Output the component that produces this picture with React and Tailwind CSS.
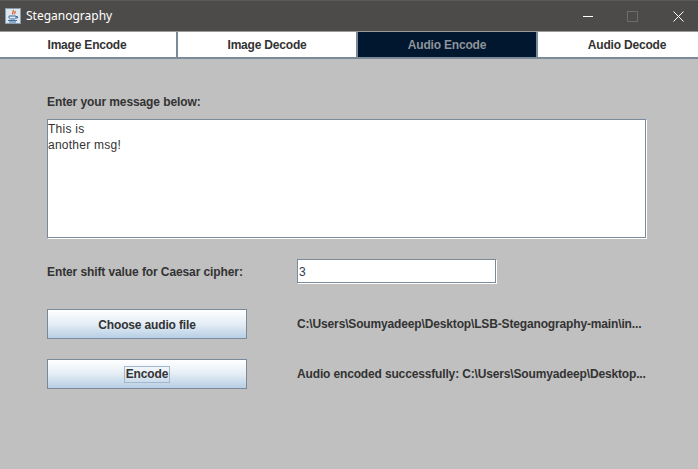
import React from 'react';

const font = 'font-["Liberation_Sans",Arial,sans-serif]';

function JavaIcon() {
  return (
    <svg width="16" height="16" viewBox="0 0 16 16" className="shrink-0">
      <rect x="0.5" y="0.5" width="15" height="15" fill="#dfe6ee" stroke="#8a9bb0" />
      <path d="M8 2c1.500 1.500-1.500 2.500 0 4.500M10 3c.8 1-1 2 0 3" fill="none" stroke="#d9541e" strokeWidth="1.200" />
      <path d="M4 8h7v1.500c0 1-1 1.500-2 1.500H6c-1 0-2-.5-2-1.500zM11 8.500h1.500v1.500H11" fill="none" stroke="#3d6c9e" strokeWidth="1" />
      <path d="M3 12.500h9M4 14h7" stroke="#3d6c9e" strokeWidth="1" />
    </svg>
  );
}

const tabs = [
  { name: 'Image Encode', w: 'w-[178px]', pad: 'pr-[2px]' },
  { name: 'Image Decode', w: 'w-[180px]', pad: '' },
  { name: 'Audio Encode', w: 'w-[180px]', pad: '', active: true },
  { name: 'Audio Decode', w: 'flex-1', pad: 'pl-[18px]', last: true },
];

function SwingButton({ children, focused }) {
  return (
    <button className="flex h-[30px] w-[200px] items-center justify-center border border-[#7a8a99] bg-gradient-to-b from-[#ffffff] via-[#e4edf5] to-[#b8cfe5] pt-[1px] text-[12px] font-bold tracking-[-0.15px] text-[#333333]">
      {focused ? <span className="border border-[#a3b8cc] px-[0.5px] leading-[15px]">{children}</span> : children}
    </button>
  );
}

export default function App() {
  return (
    <div className={`flex h-[469px] w-[698px] flex-col overflow-hidden bg-[#c0c0c0] ${font}`}>
      {/* Title bar */}
      <div className="flex h-[31px] items-center border-t border-[#5c5b59] bg-[#4d4b49] pl-[5px] font-['Noto_Sans',sans-serif] text-white">
        <JavaIcon />
        <span className="ml-[5px] text-[12px]">Steganography</span>
        <div className="ml-auto flex items-center">
          <span className="mr-[34px] h-px w-[10px] bg-white" />
          <span className="mr-[35px] h-[11px] w-[11px] border border-[#6e6c6a]" />
          <svg width="11" height="11" viewBox="0 0 11 11" className="mr-[14px]">
            <path d="M0.500 0.500l10 10M10.500 0.500l-10 10" stroke="#ffffff" strokeWidth="1" fill="none" />
          </svg>
        </div>
      </div>

      {/* Tabs */}
      <div className="flex h-[28px] border-b-2 border-t border-[#7a8a99] border-t-[#9a9a9a]">
        {tabs.map(tab => (
          <div
            key={tab.name}
            className={`flex items-center justify-center text-[12px] font-bold tracking-[-0.2px] ${tab.w} ${tab.pad} ${tab.last ? '' : 'border-r-2 border-[#7a8a99]'} ${tab.active ? 'bg-[#00172f] text-[#8f9398]' : 'bg-white text-[#333333]'}`}
          >
            {tab.name}
          </div>
        ))}
      </div>

      {/* Audio encode panel */}
      <div className="flex flex-col pl-[47px] pt-[36px] text-[12px] font-bold tracking-[-0.1px] text-[#333333]">
        <p className="h-[15px] leading-[15px]">Enter your message below:</p>
        <div className="mt-[9px] h-[120px] w-[600px] border border-[#7a8a99] border-b-white border-r-white bg-white text-[12px] font-normal leading-[16px] tracking-[0.25px] text-[#333333] shadow-[inset_-1px_-1px_0_#7a8a99]">
          <p className="mt-[1px]">This is</p>
          <p>another msg!</p>
        </div>

        <div className="mt-[20px] flex h-[25px] items-center">
          <span className="w-[250px]">Enter shift value for Caesar cipher:</span>
          <div className="flex h-[25px] w-[200px] items-center border border-[#7a8a99] border-b-white border-r-white bg-white px-[1px] text-[12px] font-normal text-[#2b3a55] shadow-[inset_-1px_-1px_0_#7a8a99]">
            3
          </div>
        </div>

        <div className="mt-[25px] flex items-center">
          <SwingButton>Choose audio file</SwingButton>
          <span className="ml-[50px] tracking-[-0.15px]">C:\Users\Soumyadeep\Desktop\LSB-Steganography-main\in...</span>
        </div>

        <div className="mt-[20px] flex items-center">
          <SwingButton focused>Encode</SwingButton>
          <span className="ml-[50px] tracking-[-0.15px]">Audio encoded successfully: C:\Users\Soumyadeep\Desktop...</span>
        </div>
      </div>
    </div>
  );
}
